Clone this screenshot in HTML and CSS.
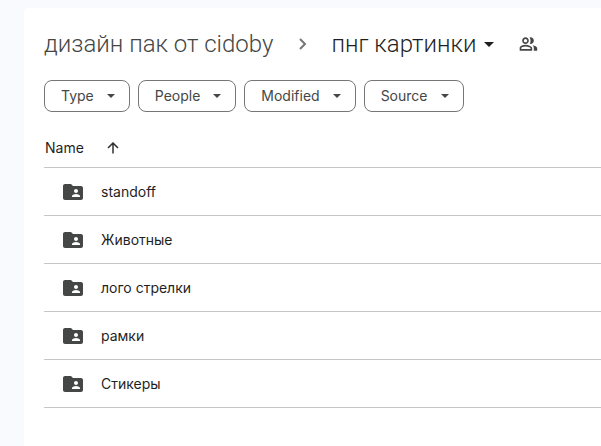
FILE: index.html
```html
<!DOCTYPE html>
<html lang="en">
<head>
<meta charset="utf-8">
<title>Drive</title>
<link rel="stylesheet" href="styles.css">
</head>
<body>
<svg class="sprite" aria-hidden="true">
  <symbol id="caret" viewBox="0 0 10 5"><path d="M0 0h10L5 5z"/></symbol>
  <symbol id="folder" viewBox="0 0 24 24"><path d="M20 6h-8l-2-2H4c-1.100 0-1.990.9-1.990 2L2 18c0 1.100.9 2 2 2h16c1.100 0 2-.9 2-2V8c0-1.100-.9-2-2-2zm-5 3c1.100 0 2 .9 2 2s-.9 2-2 2-2-.9-2-2 .9-2 2-2zm4 8h-8v-1c0-1.330 2.670-2 4-2s4 .67 4 2v1z"/></symbol>
</svg>
<main class="panel">
  <nav class="crumbs">
    <a class="parent" href="#">дизайн пак от cidoby</a>
    <svg class="chevron" viewBox="0 0 8 12" aria-hidden="true"><path d="M1 1l5 5-5 5"/></svg>
    <button class="current" type="button">пнг картинки <svg class="caret-large"><use href="#caret"/></svg></button>
    <button class="share" type="button" aria-label="Shared"><svg class="people" viewBox="0 0 24 24"><path d="M9 12c2.200 0 4-1.800 4-4s-1.800-4-4-4-4 1.800-4 4 1.800 4 4 4zm0-6c1.100 0 2 .9 2 2s-.9 2-2 2-2-.9-2-2 .9-2 2-2zM14 14.050C12.700 13.500 11 13 9 13s-3.700.5-5 1.050c-1.200.5-2 1.600-2 2.850V20h15v-3.100c0-1.250-1.800-2.350-3-2.850zM15 18H4v-1.100c0-.5.300-.8.800-1.050C5.900 15.400 7.500 15 9 15s3.100.4 4.200.85c.5.250 1.800.55 1.800 1.050V18zM14 11.850c.3.100.7.150 1 .15 2.200 0 4-1.800 4-4s-1.800-4-4-4c-.3 0-.7.050-1 .15.600.75 1 2.200 1 3.850s-.4 3.100-1 3.850zM17.500 13.400c1 .9 1.500 2.100 1.500 3.500V20h4v-3.100c0-1.700-2.700-2.900-5.500-3.500z"/></svg></button>
  </nav>
  <div class="filters">
    <button class="chip" type="button">Type <svg class="caret"><use href="#caret"/></svg></button>
    <button class="chip" type="button">People <svg class="caret"><use href="#caret"/></svg></button>
    <button class="chip" type="button">Modified <svg class="caret"><use href="#caret"/></svg></button>
    <button class="chip" type="button">Source <svg class="caret"><use href="#caret"/></svg></button>
  </div>
  <table class="files">
    <thead>
      <tr><th><button class="sort" type="button">Name <svg class="arrow" viewBox="0 0 24 24" aria-hidden="true"><path d="M12 23V2M2 12L12 2l10 10"/></svg></button></th></tr>
    </thead>
    <tbody>
      <tr><td><div class="file"><svg class="folder"><use href="#folder"/></svg>standoff</div></td></tr>
      <tr><td><div class="file"><svg class="folder"><use href="#folder"/></svg>Животные</div></td></tr>
      <tr><td><div class="file"><svg class="folder"><use href="#folder"/></svg>лого стрелки</div></td></tr>
      <tr><td><div class="file"><svg class="folder"><use href="#folder"/></svg>рамки</div></td></tr>
      <tr><td><div class="file"><svg class="folder"><use href="#folder"/></svg>Стикеры</div></td></tr>
    </tbody>
  </table>
</main>
</body>
</html>
```
FILE: styles.css
```css
* { box-sizing: border-box; }
body {
  margin: 0;
  padding: 8px 0 0 24px;
  min-height: 100vh;
  display: flex;
  background: #f8fafd;
  color: #1f1f1f;
  font: 14px/20px Inter, "Liberation Sans", sans-serif;
}
.sprite { position: absolute; width: 0; height: 0; }
svg { flex: none; fill: currentColor; }
button {
  display: flex;
  align-items: center;
  margin: 0;
  padding: 0;
  border: 0;
  background: none;
  color: inherit;
  font: inherit;
  white-space: nowrap;
}
.panel {
  flex: 1;
  min-width: 0;
  padding: 16px 0 0 20px;
  background: #fff;
  border-top-left-radius: 4px;
}
.crumbs {
  display: flex;
  align-items: center;
  height: 40px;
  font-family: Roboto, "Liberation Sans", sans-serif;
  font-size: 24px;
  font-weight: 350;
  line-height: 32px;
}
.parent {
  color: #444746;
  text-decoration: none;
  white-space: nowrap;
}
.chevron {
  width: 8px;
  height: 12px;
  margin: 0 24px 0 26px;
  fill: none;
  stroke: #747775;
  stroke-width: 2;
}
.current { gap: 8px; }
.caret-large { width: 10px; height: 5px; }
.share { margin-left: 24px; color: #444746; }
.people { width: 20px; height: 20px; }
.filters {
  display: flex;
  gap: 8px;
  margin-top: 16px;
}
.chip {
  height: 32px;
  gap: 13px;
  padding: 0 14px 0 16px;
  border: 1px solid #747775;
  border-radius: 8px;
  color: #444746;
}
.caret { width: 8px; height: 4px; }
.files {
  width: 100%;
  margin-top: 16px;
  border-spacing: 0;
}
th, td {
  padding: 0;
  border-bottom: 1px solid #c4c7c5;
  text-align: left;
}
th { height: 40px; font-weight: 400; }
td { height: 48px; }
.sort { gap: 23px; padding-left: 1px; }
.arrow {
  width: 12px;
  height: 12px;
  fill: none;
  stroke: #303030;
  stroke-width: 3;
}
.file {
  display: flex;
  align-items: center;
  gap: 16px;
  padding-left: 17px;
}
.folder { width: 24px; height: 24px; color: #444746; }
```
